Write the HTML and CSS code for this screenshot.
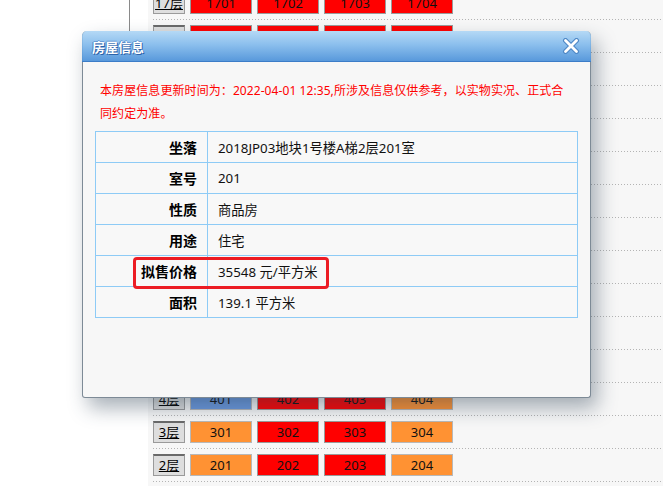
FILE: index.html
```html
<!DOCTYPE html>
<html lang="zh-CN">
<head>
<meta charset="utf-8">
<title>房屋信息</title>
<link rel="stylesheet" href="styles.css">
</head>
<body>
<div class="page">
  <div class="side"><div class="side-line"></div></div>
  <div class="panel">
    <div class="floors">
      <div class="row"><a class="floor">17层</a><span class="cell red">1701</span><span class="cell red">1702</span><span class="cell red">1703</span><span class="cell red">1704</span></div>
      <div class="row"><a class="floor">16层</a><span class="cell red">1601</span><span class="cell red">1602</span><span class="cell red">1603</span><span class="cell red">1604</span></div>
      <div class="row"><a class="floor">15层</a><span class="cell red">1501</span><span class="cell red">1502</span><span class="cell red">1503</span><span class="cell red">1504</span></div>
      <div class="row"><a class="floor">13层</a><span class="cell red">1301</span><span class="cell red">1302</span><span class="cell red">1303</span><span class="cell red">1304</span></div>
      <div class="row"><a class="floor">12层</a><span class="cell red">1201</span><span class="cell red">1202</span><span class="cell red">1203</span><span class="cell red">1204</span></div>
      <div class="row"><a class="floor">11层</a><span class="cell red">1101</span><span class="cell red">1102</span><span class="cell red">1103</span><span class="cell red">1104</span></div>
      <div class="row"><a class="floor">10层</a><span class="cell red">1001</span><span class="cell red">1002</span><span class="cell red">1003</span><span class="cell red">1004</span></div>
      <div class="row"><a class="floor">9层</a><span class="cell red">901</span><span class="cell red">902</span><span class="cell red">903</span><span class="cell red">904</span></div>
      <div class="row"><a class="floor">8层</a><span class="cell red">801</span><span class="cell red">802</span><span class="cell red">803</span><span class="cell red">804</span></div>
      <div class="row"><a class="floor">7层</a><span class="cell red">701</span><span class="cell red">702</span><span class="cell red">703</span><span class="cell red">704</span></div>
      <div class="row"><a class="floor">6层</a><span class="cell red">601</span><span class="cell red">602</span><span class="cell red">603</span><span class="cell red">604</span></div>
      <div class="row"><a class="floor">5层</a><span class="cell red">501</span><span class="cell red">502</span><span class="cell red">503</span><span class="cell orange">504</span></div>
      <div class="row"><a class="floor">4层</a><span class="cell blue">401</span><span class="cell red">402</span><span class="cell red">403</span><span class="cell orange">404</span></div>
      <div class="row"><a class="floor">3层</a><span class="cell orange">301</span><span class="cell red">302</span><span class="cell red">303</span><span class="cell orange">304</span></div>
      <div class="row"><a class="floor">2层</a><span class="cell orange">201</span><span class="cell red">202</span><span class="cell red">203</span><span class="cell orange">204</span></div>
    </div>
  </div>
</div>

<div class="dialog">
  <div class="dlg-head">
    <span class="dlg-title">房屋信息</span>
    <svg class="dlg-close" width="18" height="16" viewBox="0 0 18 16">
      <path d="M3.5 2.5 L14.5 13.5 M14.5 2.5 L3.5 13.5" stroke="#4f88c6" stroke-width="5" stroke-linecap="round" fill="none"/>
      <path d="M3.5 2.5 L14.5 13.5 M14.5 2.5 L3.5 13.5" stroke="#ffffff" stroke-width="2.8" stroke-linecap="round" fill="none"/>
    </svg>
  </div>
  <div class="dlg-body">
    <p class="notice">本房屋信息更新时间为：2022-04-01 12:35,所涉及信息仅供参考，以实物实况、正式合同约定为准。</p>
    <div class="info-wrap">
      <table class="info">
        <tr><th>坐落</th><td>2018JP03地块1号楼A梯2层201室</td></tr>
        <tr><th>室号</th><td>201</td></tr>
        <tr><th>性质</th><td>商品房</td></tr>
        <tr><th>用途</th><td>住宅</td></tr>
        <tr><th>拟售价格</th><td>35548 元/平方米</td></tr>
        <tr><th>面积</th><td>139.1 平方米</td></tr>
      </table>
      <div class="mark"></div>
    </div>
  </div>
</div>
</body>
</html>
```
FILE: styles.css
```css
html, body {
  margin: 0;
  padding: 0;
}
body {
  width: 663px;
  height: 495px;
  overflow: hidden;
  background: #ffffff;
  font-family: "Noto Sans", "Noto Sans CJK SC", sans-serif;
  position: relative;
}
.page {
  display: flex;
  align-items: flex-start;
}
.side {
  width: 148px;
  flex: none;
}
.side-line {
  width: 129px;
  height: 120px;
  border-right: 1px solid #8a8a8a;
}
.panel {
  flex: 1;
  height: 486px;
  background: #f7f7f7;
  padding-left: 5px;
  overflow: hidden;
}
.floors {
  margin-top: -13px;
}
.row {
  display: flex;
  gap: 5px;
  height: 22px;
  padding: 5px 0 6px;
  background-image: linear-gradient(to right, #b4b4b4 0 1px, transparent 1px);
  background-size: 3px 1px;
  background-repeat: repeat-x;
  background-position: left bottom;
}
.floor {
  box-sizing: border-box;
  width: 32px;
  height: 22px;
  background: #dedede;
  border: 1px solid #9a9a9a;
  border-top: 2px solid #6a6a6a;
  color: #000;
  font-size: 13px;
  line-height: 19px;
  text-align: center;
  text-decoration: underline;
}
.cell {
  box-sizing: border-box;
  width: 62px;
  height: 22px;
  border: 1px solid #a8a8a8;
  font-size: 13px;
  line-height: 20px;
  text-align: center;
  color: #111;
}
.red { background: #ff0000; border-color: #9a9a9a; }
.orange { background: #ff9233; border-color: #b8b8b8; }
.blue { background: #6c9ae0; border-color: #b8b8b8; }

.dialog {
  position: absolute;
  left: 82px;
  top: 31px;
  width: 509px;
  height: 367px;
  box-sizing: border-box;
  border: 1px solid #7d8a96;
  border-top: none;
  border-radius: 5px 5px 3px 3px;
  background: #f7f7f7;
  box-shadow: 6px 10px 20px rgba(40, 60, 80, 0.4);
  display: flex;
  flex-direction: column;
}
.dlg-head {
  height: 30px;
  flex: none;
  margin: 0 -1px;
  border-radius: 5px 5px 0 0;
  border-bottom: 1px solid #3c7dc8;
  background: linear-gradient(to bottom, rgba(170, 212, 245, 0.86) 0%, rgba(128, 185, 236, 0.9) 45%, rgba(80, 148, 218, 0.95) 100%);
  display: flex;
  align-items: center;
  justify-content: space-between;
  padding: 0 10px 0 10px;
}
.dlg-title {
  color: #ffffff;
  font-size: 13px;
  font-weight: bold;
  text-shadow: 1px 1px 0 #2c62a8, -1px 0 0 #4a84c8, 0 -1px 0 #6a9ed8;
}
.dlg-close {
  display: block;
  margin-right: 1px;
}
.dlg-body {
  flex: 1;
  padding: 0 12px 0 12px;
}
.notice {
  margin: 17px 6px 6px 5px;
  color: #ff0000;
  font-size: 12px;
  line-height: 23px;
  letter-spacing: 0.08px;
}
.info-wrap {
  position: relative;
}
.info {
  width: 100%;
  border-collapse: collapse;
  border: 1px solid #8ecbf6;
  background: #f8f8f8;
}
.info th, .info td {
  border: 1px solid #8ecbf6;
  height: 30px;
  padding: 0;
  font-size: 13.3px;
  color: #111;
}
.info th {
  width: 101px;
  text-align: right;
  padding-right: 10px;
  font-size: 14px;
  font-weight: bold;
  color: #000;
}
.info td {
  padding-left: 10px;
  text-align: left;
}
.mark {
  position: absolute;
  left: 38px;
  top: 126px;
  width: 190px;
  height: 26px;
  border: 3px solid #ec1c24;
  border-radius: 4px;
}
```
